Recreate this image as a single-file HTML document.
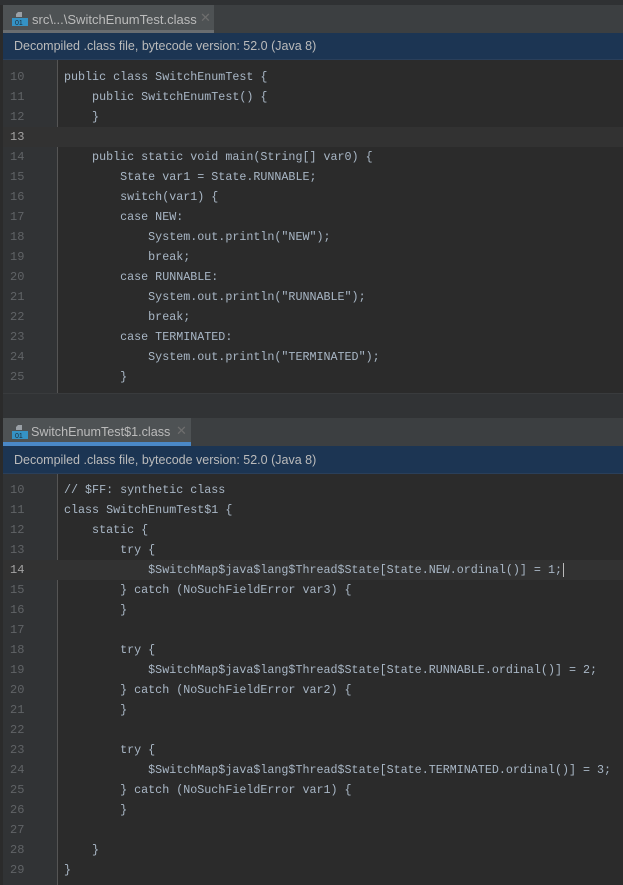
<!DOCTYPE html>
<html><head><meta charset="utf-8"><style>
*{margin:0;padding:0;box-sizing:border-box}
html,body{width:623px;height:885px;overflow:hidden;background:#313335}
body{position:relative;font-family:"Liberation Sans",sans-serif}
.abs{position:absolute}
.tabbar{left:3px;right:0;background:#3c3f41}
.tab{background:#4e5254;color:#bbbbbb;font-size:13px;height:100%}
.tab .name{position:absolute;top:7px}
.tab .x{position:absolute;top:5px;color:#6e6e6e;font-size:13px}
.icon{position:absolute;left:9px;top:7px;width:16px;height:14px}
.banner{left:3px;right:0;background:#1c3553;color:#bbbbbb;font-size:12.5px;padding-left:11px;line-height:27px;border-bottom:1px solid #2a3f5a}
.code{left:3px;right:0;background:#2b2b2b;font-family:"Liberation Mono",monospace;font-size:11.7px;color:#a9b7c6}
.gutter{position:absolute;left:0;top:0;bottom:0;width:55px;background:#313335;border-right:1px solid #555}
.line{position:absolute;left:0;right:0;height:20px;line-height:20px;white-space:pre}
.line .n{position:absolute;left:7px;color:#606366;font-size:12px}
.line .t{position:absolute;left:61px}
.cur{background:#323232}
.cur .n{color:#a4a3a3}
</style></head><body>
<div class="abs" style="left:0;top:0;width:3px;height:885px;background:#2b2b2b"></div>
<div class="abs" style="left:0;top:0;right:0;height:5px;background:#2f3133"></div>

<div class="abs tabbar" style="top:5px;height:28px">
 <div class="abs tab" style="left:0;width:211px">
  <svg class="icon" viewBox="0 0 16 14"><path d="M6 0h4v5H4V2z" fill="#9aa0a6"/><rect x="0" y="6" width="16" height="8" fill="#3592c4"/><text x="3" y="13" font-size="7" fill="#1c2a36" font-family="Liberation Sans">01</text></svg>
  <span class="name" style="left:29px">src\...\SwitchEnumTest.class</span>
  <span class="x" style="left:197px">✕</span>
  <div class="abs" style="left:0;right:0;bottom:0;height:3px;background:#6a6d70"></div>
 </div>
</div>
<div class="abs banner" style="top:33px;height:27px">Decompiled .class file, bytecode version: 52.0 (Java 8)</div>

<div class="abs code" style="top:60px;height:333px">
 <div class="gutter"></div>
 <div class="line" style="top:7px"><span class="n">10</span><span class="t">public class SwitchEnumTest {</span></div>
 <div class="line" style="top:27px"><span class="n">11</span><span class="t">    public SwitchEnumTest() {</span></div>
 <div class="line" style="top:47px"><span class="n">12</span><span class="t">    }</span></div>
 <div class="line cur" style="top:67px"><span class="n">13</span><span class="t"></span></div>
 <div class="line" style="top:87px"><span class="n">14</span><span class="t">    public static void main(String[] var0) {</span></div>
 <div class="line" style="top:107px"><span class="n">15</span><span class="t">        State var1 = State.RUNNABLE;</span></div>
 <div class="line" style="top:127px"><span class="n">16</span><span class="t">        switch(var1) {</span></div>
 <div class="line" style="top:147px"><span class="n">17</span><span class="t">        case NEW:</span></div>
 <div class="line" style="top:167px"><span class="n">18</span><span class="t">            System.out.println("NEW");</span></div>
 <div class="line" style="top:187px"><span class="n">19</span><span class="t">            break;</span></div>
 <div class="line" style="top:207px"><span class="n">20</span><span class="t">        case RUNNABLE:</span></div>
 <div class="line" style="top:227px"><span class="n">21</span><span class="t">            System.out.println("RUNNABLE");</span></div>
 <div class="line" style="top:247px"><span class="n">22</span><span class="t">            break;</span></div>
 <div class="line" style="top:267px"><span class="n">23</span><span class="t">        case TERMINATED:</span></div>
 <div class="line" style="top:287px"><span class="n">24</span><span class="t">            System.out.println("TERMINATED");</span></div>
 <div class="line" style="top:307px"><span class="n">25</span><span class="t">        }</span></div>
</div>
<div class="abs" style="left:3px;right:0;top:393px;height:25px;background:#313335;border-top:1px solid #393b3d"></div>

<div class="abs tabbar" style="top:418px;height:28px">
 <div class="abs tab" style="left:0;width:188px">
  <svg class="icon" viewBox="0 0 16 14"><path d="M6 0h4v5H4V2z" fill="#9aa0a6"/><rect x="0" y="6" width="16" height="8" fill="#3592c4"/><text x="3" y="13" font-size="7" fill="#1c2a36" font-family="Liberation Sans">01</text></svg>
  <span class="name" style="left:28px;font-size:12.6px">SwitchEnumTest$1.class</span>
  <span class="x" style="left:173px">✕</span>
  <div class="abs" style="left:0;right:0;bottom:0;height:4px;background:#4a88c7"></div>
 </div>
</div>
<div class="abs banner" style="top:446px;height:28px;line-height:28px">Decompiled .class file, bytecode version: 52.0 (Java 8)</div>

<div class="abs code" style="top:474px;height:411px">
 <div class="gutter"></div>
 <div class="line" style="top:6px"><span class="n">10</span><span class="t">// $FF: synthetic class</span></div>
 <div class="line" style="top:26px"><span class="n">11</span><span class="t">class SwitchEnumTest$1 {</span></div>
 <div class="line" style="top:46px"><span class="n">12</span><span class="t">    static {</span></div>
 <div class="line" style="top:66px"><span class="n">13</span><span class="t">        try {</span></div>
 <div class="line cur" style="top:86px"><span class="n">14</span><span class="t">            $SwitchMap$java$lang$Thread$State[State.NEW.ordinal()] = 1;<span style="border-left:1px solid #bbb;margin-left:1px"></span></span></div>
 <div class="line" style="top:106px"><span class="n">15</span><span class="t">        } catch (NoSuchFieldError var3) {</span></div>
 <div class="line" style="top:126px"><span class="n">16</span><span class="t">        }</span></div>
 <div class="line" style="top:146px"><span class="n">17</span><span class="t"></span></div>
 <div class="line" style="top:166px"><span class="n">18</span><span class="t">        try {</span></div>
 <div class="line" style="top:186px"><span class="n">19</span><span class="t">            $SwitchMap$java$lang$Thread$State[State.RUNNABLE.ordinal()] = 2;</span></div>
 <div class="line" style="top:206px"><span class="n">20</span><span class="t">        } catch (NoSuchFieldError var2) {</span></div>
 <div class="line" style="top:226px"><span class="n">21</span><span class="t">        }</span></div>
 <div class="line" style="top:246px"><span class="n">22</span><span class="t"></span></div>
 <div class="line" style="top:266px"><span class="n">23</span><span class="t">        try {</span></div>
 <div class="line" style="top:286px"><span class="n">24</span><span class="t">            $SwitchMap$java$lang$Thread$State[State.TERMINATED.ordinal()] = 3;</span></div>
 <div class="line" style="top:306px"><span class="n">25</span><span class="t">        } catch (NoSuchFieldError var1) {</span></div>
 <div class="line" style="top:326px"><span class="n">26</span><span class="t">        }</span></div>
 <div class="line" style="top:346px"><span class="n">27</span><span class="t"></span></div>
 <div class="line" style="top:366px"><span class="n">28</span><span class="t">    }</span></div>
 <div class="line" style="top:386px"><span class="n">29</span><span class="t">}</span></div>
</div>
</body></html>
